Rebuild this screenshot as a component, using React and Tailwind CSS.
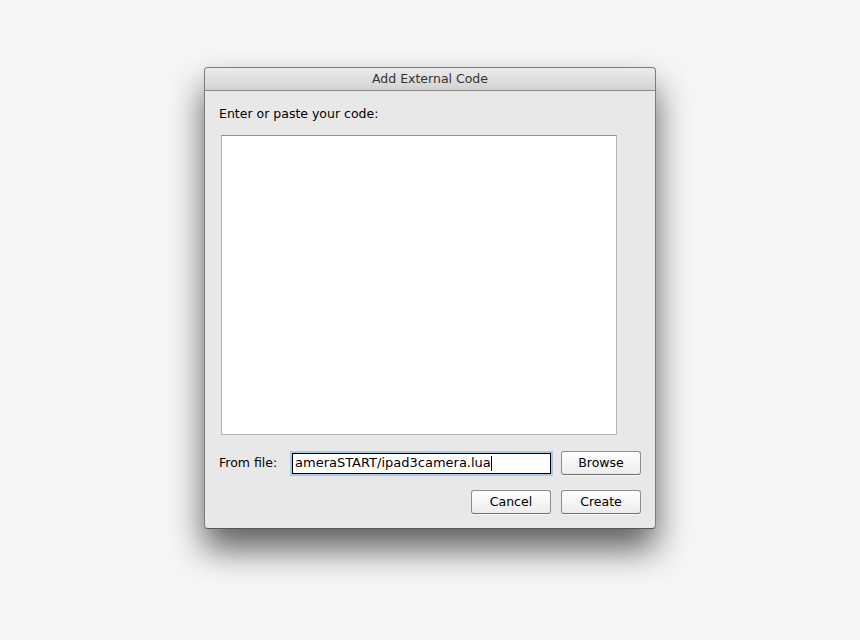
import React from "react";

const font = { fontFamily: '"DejaVu Sans", "Liberation Sans", sans-serif' };

function MacButton({ children }) {
  return (
    <button className="w-[80px] h-[24px] rounded-[3px] border border-[#8e8e8e] border-b-[#6f6f6f] bg-gradient-to-b from-[#ffffff] to-[#ececec] text-[12.5px] text-black shadow-[0_1px_0_rgba(255,255,255,0.6)] flex items-center justify-center">
      {children}
    </button>
  );
}

export default function App() {
  return (
    <div className="w-[860px] h-[640px] bg-[#f6f6f6] flex justify-center pt-[67px]" style={font}>
      <div className="w-[452px] h-[462px] flex flex-col rounded-[4px] border border-[#7c7c7c] border-b-[#555555] bg-[#e8e8e8] shadow-[0_20px_34px_rgba(0,0,0,0.62)]">
        <div className="h-[23px] shrink-0 rounded-t-[4px] bg-gradient-to-b from-[#ececec] to-[#d2d2d2] border-b border-[#888888] flex items-center justify-center text-[12.5px] text-[#333333]">
          Add External Code
        </div>
        <div className="flex flex-col px-[14px]">
          <p className="mt-[15px] h-[16px] text-[12.5px] leading-[16px] text-black">
            Enter or paste your code:
          </p>
          <div className="mt-[13px] ml-[2px] w-[396px] h-[300px] bg-white border border-[#b5b5b5] border-t-[#909090]" />
          <div className="mt-[16px] flex items-center">
            <span className="w-[73px] text-[12.5px] text-black">From file:</span>
            <div className="w-[259px] h-[21px] border border-black bg-white shadow-[0_0_0_2px_#a9c8ec] flex items-center overflow-hidden pl-[2px] text-[13px] text-black whitespace-nowrap">
              ameraSTART/ipad3camera.lua
              <span className="w-px h-[15px] bg-black" />
            </div>
            <div className="ml-auto">
              <MacButton>Browse</MacButton>
            </div>
          </div>
          <div className="mt-[15px] flex justify-end gap-[10px]">
            <MacButton>Cancel</MacButton>
            <MacButton>Create</MacButton>
          </div>
        </div>
      </div>
    </div>
  );
}
